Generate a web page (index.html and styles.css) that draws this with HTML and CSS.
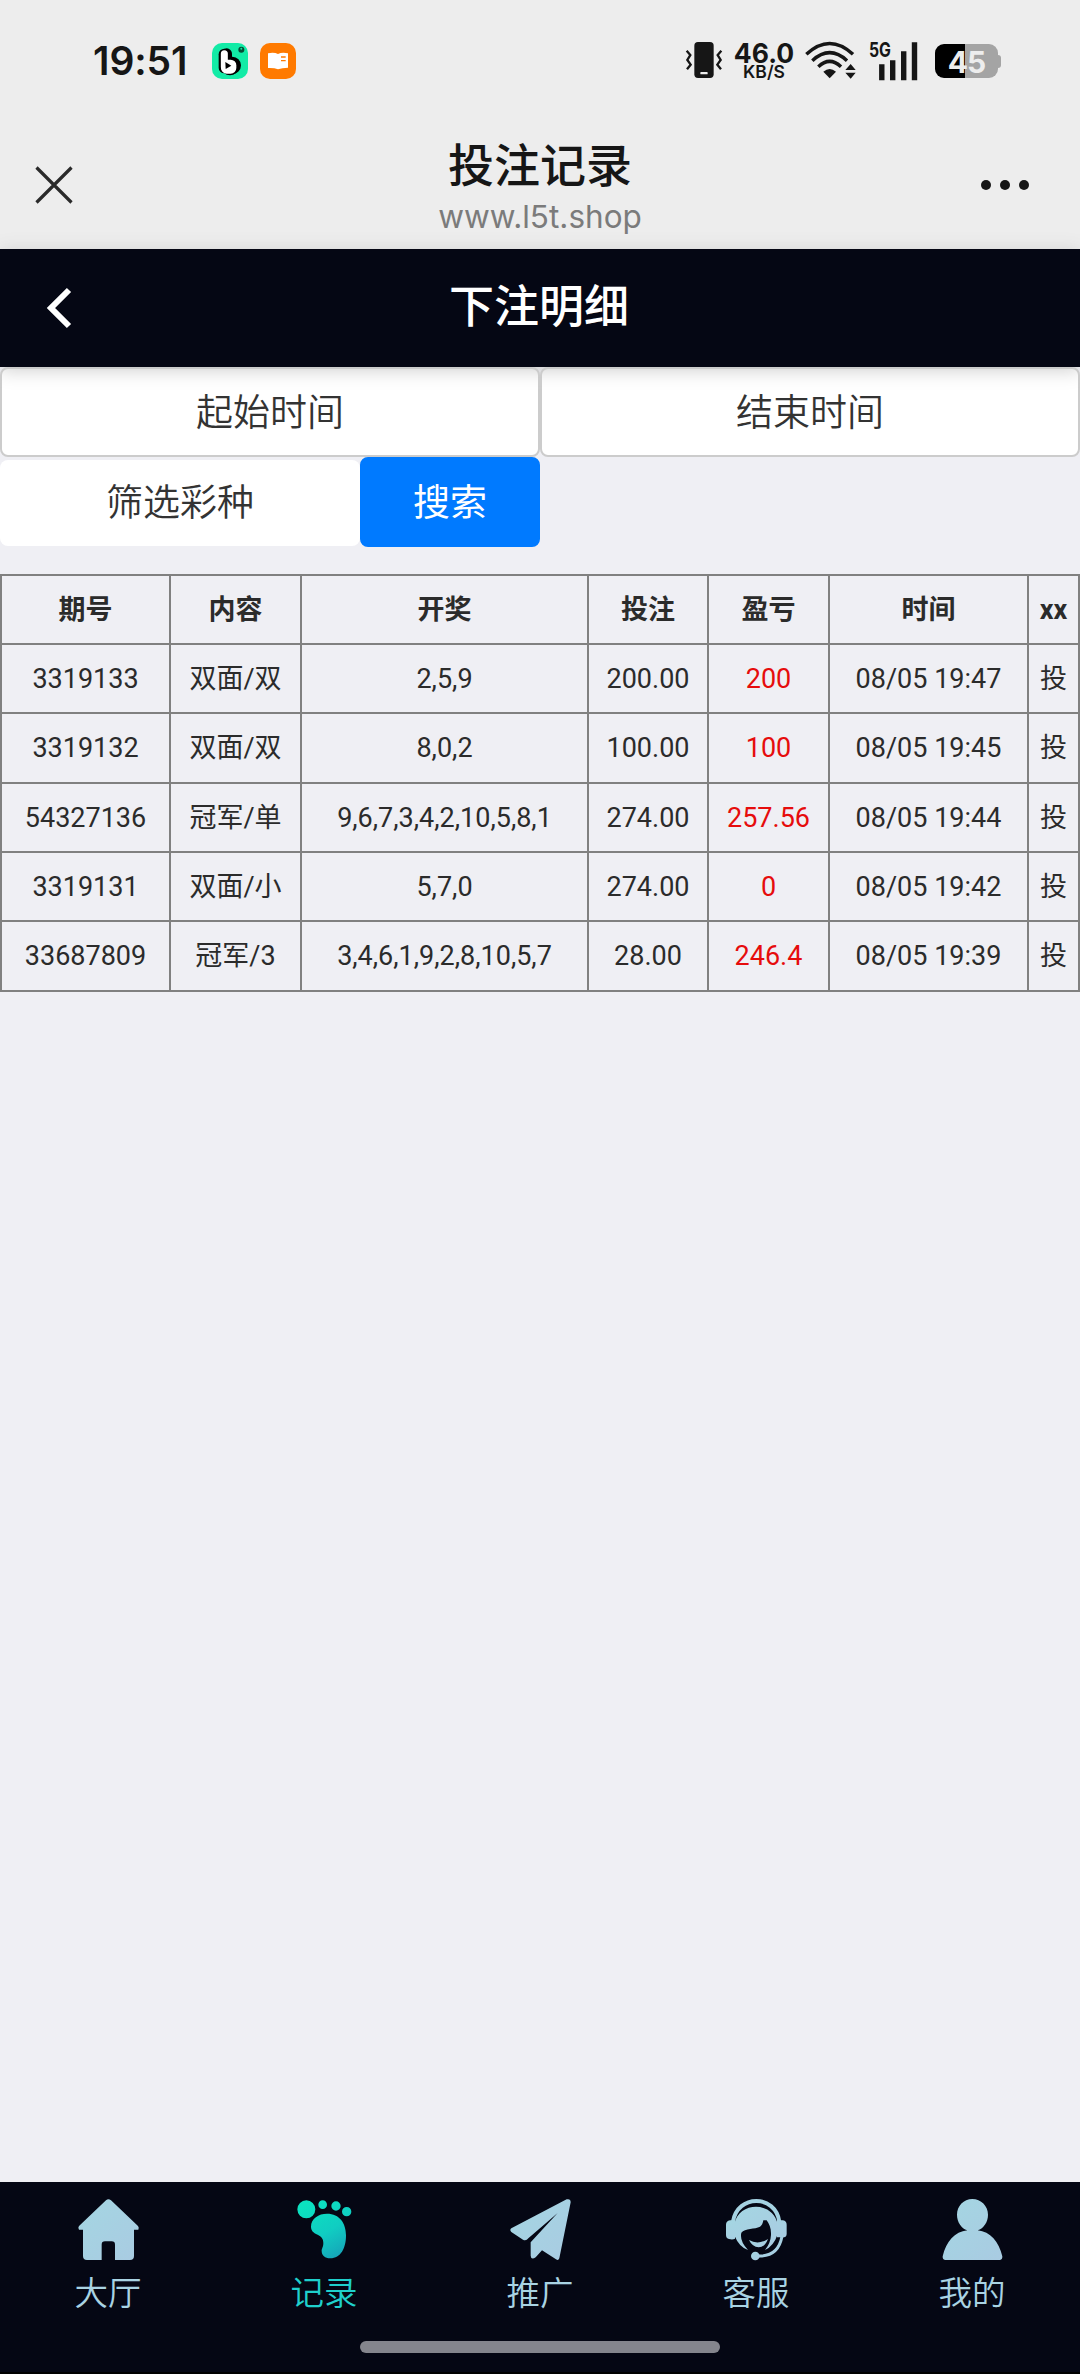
FILE: index.html
```html
<!DOCTYPE html>
<html lang="zh-CN">
<head>
    <meta charset="UTF-8">
    <meta name="viewport" content="width=device-width, initial-scale=1.0">
    <title>投注记录</title>
    <link rel="stylesheet" href="styles.css">
</head>
<body>
    <div class="statusbar">
        <span class="clock">19:51</span>
        <svg class="app" viewBox="0 0 108 108">
            <rect width="108" height="108" rx="30" fill="#12eba6"/>
            <g fill="none" stroke="#000" stroke-linecap="round">
                <path d="M44 32V72" stroke-width="32"/>
                <circle cx="61" cy="67" r="13" stroke-width="26"/>
                <path d="M37 34V74" stroke-width="34"/>
                <circle cx="54" cy="71" r="14" stroke-width="24"/>
            </g>
            <path d="M37 32L37 72" stroke="#fff" stroke-width="21" stroke-linecap="round"/>
            <rect x="27" y="50" width="46" height="42" rx="17" fill="#fff"/>
            <path d="M40 57L58 68L41 78Z" fill="#000"/>
            <circle cx="88" cy="20" r="9" fill="#064b36"/>
            <circle cx="88" cy="17" r="3" fill="#12eba6"/>
        </svg>
        <svg class="app" viewBox="0 0 108 108">
            <rect width="108" height="108" rx="30" fill="#ff7a00"/>
            <path d="M24 31Q42 27 54 33Q66 27 84 31V74Q66 74 54 79Q42 74 24 75Z" fill="#fff"/>
            <path d="M63 42H77M63 53H77" stroke="#ff7a00" stroke-width="4"/>
        </svg>
        <div class="status-right">
            <svg width="38" height="38" viewBox="0 0 114 114">
                <rect x="28" y="3" width="58" height="108" rx="11" fill="#161616"/>
                <rect x="46" y="93" width="22" height="7" rx="2" fill="#ededed"/>
                <path d="M5 29L16 42L7 57L17 71L6 85M109 29L98 42L107 57L97 71L108 85" fill="none" stroke="#161616" stroke-width="7"/>
            </svg>
            <div class="speed"><b>46.0</b><span>KB/S</span></div>
            <svg class="wifi" width="51" height="38" viewBox="0 0 153 114">
                <g fill="none" stroke="#161616" stroke-width="10.5">
                    <path d="M4 40Q74 -25 144 40"/>
                    <path d="M22 59Q74 11 126 59"/>
                    <path d="M40 77Q74 45 108 77"/>
                </g>
                <path d="M55 92Q74 76 93 92L74 112Z" fill="#161616"/>
                <path d="M121 87L137 69L152 87ZM121 95L137 113L152 95Z" fill="#161616"/>
            </svg>
            <svg class="signal" width="48" height="38" viewBox="0 0 48 38">
                <text class="net" x="-1" y="16" textLength="22" lengthAdjust="spacingAndGlyphs">5G</text>
                <path d="M11.8 26V36.5M22.7 22V36.5M33.7 13V36.5M44.5 4V36.5" stroke="#161616" stroke-width="5.4" stroke-linecap="square"/>
            </svg>
            <div class="battery"><span>45</span></div>
        </div>
    </div>

    <div class="titlebar">
        <svg width="38" height="38" viewBox="0 0 38 38">
            <path d="M1.5 1.5L36.5 36.5M36.5 1.5L1.5 36.5" stroke="#2a2a2a" stroke-width="3.2"/>
        </svg>
        <div class="page-title">
            <h1>投注记录</h1>
            <p>www.l5t.shop</p>
        </div>
        <div class="more"><i></i><i></i><i></i></div>
    </div>

    <header class="header">
        <svg width="26" height="42" viewBox="0 0 26 42">
            <path d="M23 3L5 21L23 39" fill="none" stroke="#fff" stroke-width="6"/>
        </svg>
        <h2>下注明细</h2>
    </header>

    <main>
        <div class="filters">
            <button class="btn">起始时间</button>
            <button class="btn">结束时间</button>
            <button class="btn select">筛选彩种</button>
            <button class="btn search">搜索</button>
        </div>

        <table class="records">
            <colgroup>
                <col class="c1"><col class="c2"><col class="c3"><col class="c4"><col class="c5"><col class="c6"><col class="c7">
            </colgroup>
            <tr><th>期号</th><th>内容</th><th>开奖</th><th>投注</th><th>盈亏</th><th>时间</th><th>xx</th></tr>
            <tr><td>3319133</td><td>双面/双</td><td>2,5,9</td><td>200.00</td><td class="red">200</td><td>08/05 19:47</td><td>投</td></tr>
            <tr class="tall"><td>3319132</td><td>双面/双</td><td>8,0,2</td><td>100.00</td><td class="red">100</td><td>08/05 19:45</td><td>投</td></tr>
            <tr><td>54327136</td><td>冠军/单</td><td>9,6,7,3,4,2,10,5,8,1</td><td>274.00</td><td class="red">257.56</td><td>08/05 19:44</td><td>投</td></tr>
            <tr><td>3319131</td><td>双面/小</td><td>5,7,0</td><td>274.00</td><td class="red">0</td><td>08/05 19:42</td><td>投</td></tr>
            <tr class="tall"><td>33687809</td><td>冠军/3</td><td>3,4,6,1,9,2,8,10,5,7</td><td>28.00</td><td class="red">246.4</td><td>08/05 19:39</td><td>投</td></tr>
        </table>
    </main>

    <nav class="tabbar">
        <div class="tabs">
            <a class="tab">
                <svg viewBox="0 0 183 183">
                    <defs>
                        <linearGradient id="pale" x1="0" y1="0" x2="1" y2="1">
                            <stop offset="0" stop-color="#a4d6e2"/>
                            <stop offset="1" stop-color="#a9cbe2"/>
                        </linearGradient>
                    </defs>
                    <path fill="url(#pale)" d="M84 4Q91 -3 99 4L180 81Q184 86 181 92H168V171Q168 183 156 183H111V137Q111 127 101 127H81Q71 127 71 137V183H27Q15 183 15 171V92H3Q-1 86 3 81Z"/>
                </svg>
                <span>大厅</span>
            </a>
            <a class="tab active">
                <svg viewBox="0 0 183 183">
                    <defs>
                        <linearGradient id="teal" gradientUnits="userSpaceOnUse" x1="30" y1="20" x2="130" y2="180">
                            <stop offset="0" stop-color="#0be2c0"/>
                            <stop offset=".55" stop-color="#10cdc2"/>
                            <stop offset="1" stop-color="#16a3b8"/>
                        </linearGradient>
                    </defs>
                    <g fill="url(#teal)">
                        <path d="M10 31a27 27 0 1 0 54 0a27 27 0 1 0 -54 0M73 17a13 13 0 1 0 26 0a13 13 0 1 0 -26 0M112 21a14 14 0 1 0 28 0a14 14 0 1 0 -28 0M144 38a14 14 0 1 0 28 0a14 14 0 1 0 -28 0M51 83C51 58 74 44 99 44C137 44 156 73 156 109C156 148 140 178 109 178C93 178 83 169 83 156C83 148 88 145 88 132C88 118 82 113 71 107C57 101 51 94 51 83Z"/>
                    </g>
                </svg>
                <span>记录</span>
            </a>
            <a class="tab">
                <svg viewBox="0 0 183 183">
                    <path fill="url(#pale)" d="M4 88L170 1Q182 -2 182 10L148 178Q145 186 138 181L96 154L77 175Q63 184 62 170V130L143 42L55 118Q48 127 39 122L4 99Q-2 93 4 88Z"/>
                </svg>
                <span>推广</span>
            </a>
            <a class="tab">
                <svg viewBox="0 0 183 183">
                    <path d="M21 68C34 -15 148 -15 160 68" fill="none" stroke="#a5d2e2" stroke-width="12"/>
                    <g fill="url(#pale)">
                        <path d="M12 64H27V119Q20 123 9 120Q0 118 0 108V77Q0 66 12 64ZM171 64H153V115H162Q182 118 182 105V77Q182 66 171 64Z"/>
                        <path d="M25 75C38 7 140 5 155 75V106Q143 142 117 153Q134 132 135 108C136 88 130 75 122 64H112Q110 78 102 83C87 91 57 87 46 101Q40 126 66 153Q40 144 27 113Z"/>
                        <path d="M69 123Q96 139 126 120Q117 144 98 145Q79 144 69 123Z"/>
                        <circle cx="88" cy="171" r="13"/>
                    </g>
                    <path d="M96 171C137 173 161 151 168 112" fill="none" stroke="#a7cfe2" stroke-width="9"/>
                </svg>
                <span>客服</span>
            </a>
            <a class="tab">
                <svg viewBox="0 0 183 183">
                    <path fill="url(#pale)" d="M91 0C117 0 138 21 138 47C138 69 125 88 107 94C145 98 171 128 181 172Q182 183 172 183H11Q1 183 2 172C12 128 38 98 76 94C58 88 45 69 45 47C45 21 65 0 91 0Z"/>
                </svg>
                <span>我的</span>
            </a>
        </div>
        <div class="home-indicator"></div>
    </nav>
</body>
</html>
```

FILE: styles.css
```css
*{
    box-sizing: border-box;
}
body{
    margin: 0px;
    height: 2374px;
    display: flex;
    flex-direction: column;
    background-color: #efeff4;
    color: #2b2b2b;
    font-family: Roboto, 'Noto Sans CJK SC', sans-serif;
}
h1, h2, p{
    margin: 0px;
    font-weight: 500;
}
svg{
    display: block;
    flex: none;
    overflow: visible;
}

/* phone status bar */
.statusbar{
    height: 120px;
    padding: 0px 79px 0px 93px;
    display: flex;
    align-items: center;
    background-color: #ededed;
    color: #161616;
    font-family: Inter, sans-serif;
}
.clock{
    width: 119px;
    font-size: 39px;
    font-weight: 600;
    letter-spacing: -0.1px;
}
.app{
    width: 36px;
    height: 36px;
    margin: 2px 12px 0px 0px;
}
.status-right{
    margin-left: auto;
    display: flex;
    align-items: center;
}
.speed{
    width: 60px;
    margin-left: 11px;
    display: flex;
    flex-direction: column;
    align-items: center;
}
.speed b{
    font-size: 26.5px;
    line-height: 23px;
    font-weight: 700;
}
.speed span{
    font-size: 17.5px;
    line-height: 14px;
    font-weight: 600;
}
.wifi{
    margin-left: 11px;
}
.signal{
    margin-left: 14px;
}
.net{
    font-size: 20px;
    font-weight: 700;
    fill: #161616;
}
.battery{
    position: relative;
    width: 63px;
    height: 34px;
    margin: 2px 3px 0px 17px;
    border-radius: 9px;
    background: linear-gradient(to right, #000 30px, #a4a4a4 30px);
    text-align: center;
    color: #ededed;
    font-size: 30px;
    line-height: 36px;
    font-weight: 700;
    letter-spacing: -1px;
}
.battery::after{
    content: "";
    position: absolute;
    right: -3px;
    top: 11px;
    width: 3px;
    height: 13px;
    border-radius: 0px 4px 4px 0px;
    background-color: #a4a4a4;
}

/* browser title bar */
.titlebar{
    height: 129px;
    padding: 0px 51px 0px 35px;
    display: flex;
    justify-content: space-between;
    align-items: center;
    background-color: #ededed;
}
.page-title{
    margin-left: 26px;
    padding-top: 6px;
    text-align: center;
}
.page-title h1{
    font-size: 46px;
    line-height: 58px;
    color: #161616;
}
.page-title p{
    font-family: Inter, sans-serif;
    font-size: 31.5px;
    line-height: 44px;
    font-weight: 400;
    color: #7b7b7b;
}
.more{
    display: flex;
    gap: 9px;
}
.more i{
    width: 10px;
    height: 10px;
    border-radius: 50%;
    background-color: #161616;
}

.header{
    position: relative;
    z-index: 1;
    height: 118px;
    padding: 0px 46px;
    display: flex;
    align-items: center;
    background-color: #050714;
    box-shadow: 0px 3px 18px #ccc;
    color: white;
}
.header h2{
    flex: 1;
    padding-right: 28px;
    text-align: center;
    font-size: 45px;
    line-height: 118px;
}

main{
    flex: 1;
}
.filters{
    display: grid;
    grid-template-columns: repeat(6, 180px);
    grid-auto-rows: 90px;
}
.btn{
    grid-column: span 3;
    padding: 0px 0px 5px;
    border: 2px solid #ccc;
    border-radius: 8px;
    background-color: white;
    color: #333;
    font-family: inherit;
    font-size: 37px;
    font-weight: 350;
}
.select{
    grid-column: span 2;
    border: 0px;
    margin: 3px 0px 1px;
    padding-bottom: 7px;
}
.search{
    grid-column: span 1;
    border-color: #007aff;
    background-color: #007aff;
    color: white;
    font-weight: 400;
}

.records{
    width: 1080px;
    margin-top: 27px;
    table-layout: fixed;
    border-collapse: collapse;
    font-size: 27px;
    text-align: center;
}
.records th, .records td{
    padding: 0px;
    border: 2px solid #808080;
    white-space: nowrap;
    line-height: 40px;
}
.records tr{
    height: 69px;
}
.records .tall{
    height: 70px;
}
.c1{ width: 169px; }
.c2{ width: 131px; }
.c3{ width: 287px; }
.c4{ width: 120px; }
.c5{ width: 121px; }
.c6{ width: 199px; }
.c7{ width: 51px; }
.red{
    color: #e60c0c;
}

.tabbar{
    height: 192px;
    background-color: #050714;
    border-bottom: 2px solid #000;
    color: #a9d3e3;
}
.tabs{
    display: flex;
    height: 159px;
    padding-top: 17px;
}
.tab{
    flex: 1;
    display: flex;
    flex-direction: column;
    align-items: center;
    font-size: 33.5px;
    font-weight: 350;
    line-height: 67px;
}
.tab svg{
    width: 61px;
    height: 61px;
}
.active{
    color: #1fd0cc;
}
.home-indicator{
    width: 360px;
    height: 12px;
    margin: 0px auto;
    border-radius: 6px;
    background-color: #84858d;
}
```
